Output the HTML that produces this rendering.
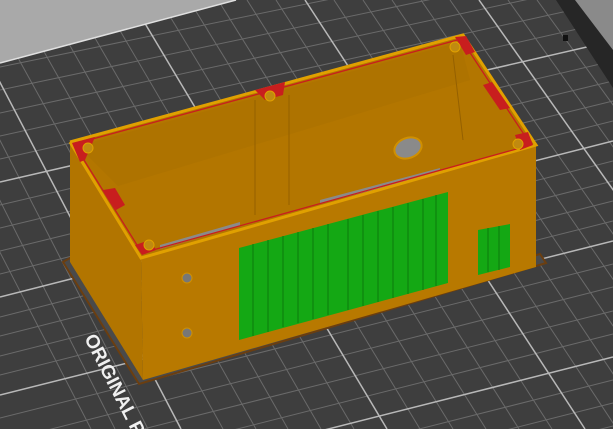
<!DOCTYPE html>
<html><head><style>
html,body{margin:0;padding:0;width:613px;height:429px;overflow:hidden;background:#3c3c3c}
svg{display:block}
</style></head><body>
<svg width="613" height="429" viewBox="0 0 613 429" xmlns="http://www.w3.org/2000/svg">
<rect width="613" height="429" fill="#3e3e3e"/>
<g stroke="#6a6a6a" stroke-width="1">
<line x1="-130" y1="0" x2="91" y2="429"/>
<line x1="-101" y1="0" x2="115" y2="429"/>
<line x1="-72" y1="0" x2="148" y2="429"/>
<line x1="-14" y1="0" x2="223" y2="429"/>
<line x1="15" y1="0" x2="256" y2="429"/>
<line x1="44" y1="0" x2="288" y2="429"/>
<line x1="73" y1="0" x2="321" y2="429"/>
<line x1="102" y1="0" x2="354" y2="429"/>
<line x1="160" y1="0" x2="420" y2="429"/>
<line x1="189" y1="0" x2="453" y2="429"/>
<line x1="218" y1="0" x2="486" y2="429"/>
<line x1="247" y1="0" x2="519" y2="429"/>
<line x1="276" y1="0" x2="552" y2="429"/>
<line x1="334" y1="0" x2="617" y2="429"/>
<line x1="363" y1="0" x2="650" y2="429"/>
<line x1="392" y1="0" x2="683" y2="429"/>
<line x1="421" y1="0" x2="716" y2="429"/>
<line x1="450" y1="0" x2="749" y2="429"/>
<line x1="508" y1="0" x2="815" y2="429"/>
<line x1="537" y1="0" x2="848" y2="429"/>
<line x1="0" y1="67" x2="613" y2="-59"/>
<line x1="0" y1="90" x2="613" y2="-39"/>
<line x1="0" y1="113" x2="613" y2="-19"/>
<line x1="0" y1="136" x2="613" y2="1"/>
<line x1="0" y1="159" x2="613" y2="21"/>
<line x1="0" y1="205" x2="613" y2="61"/>
<line x1="0" y1="228" x2="613" y2="81"/>
<line x1="0" y1="251" x2="613" y2="101"/>
<line x1="0" y1="274" x2="613" y2="121"/>
<line x1="0" y1="317" x2="613" y2="161"/>
<line x1="0" y1="336" x2="613" y2="181"/>
<line x1="0" y1="356" x2="613" y2="201"/>
<line x1="0" y1="375" x2="613" y2="221"/>
<line x1="0" y1="418" x2="613" y2="264"/>
<line x1="0" y1="442" x2="613" y2="287"/>
<line x1="0" y1="465" x2="613" y2="311"/>
<line x1="0" y1="489" x2="613" y2="334"/>
<line x1="0" y1="535" x2="613" y2="380"/>
<line x1="0" y1="558" x2="613" y2="403"/>
<line x1="0" y1="582" x2="613" y2="426"/>
</g>
<g stroke="#b8b8b8" stroke-width="1.5">
<line x1="-43" y1="0" x2="181" y2="429"/>
<line x1="131" y1="0" x2="387" y2="429"/>
<line x1="305" y1="0" x2="585" y2="429"/>
<line x1="479" y1="0" x2="782" y2="429"/>
<line x1="0" y1="182" x2="613" y2="41"/>
<line x1="0" y1="297" x2="613" y2="141"/>
<line x1="0" y1="395" x2="613" y2="241"/>
<line x1="0" y1="512" x2="613" y2="357"/>
</g>
<!-- outside bed regions -->
<polygon points="0,0 236,0 0,63" fill="#a9a9a9"/>
<line x1="0" y1="63" x2="236" y2="0" stroke="#e0e0e0" stroke-width="1.5"/>
<polygon points="556,0 613,0 613,88" fill="#262626"/>
<polygon points="575,0 613,0 613,50" fill="#8a8a8a"/>
<text x="0" y="0" transform="translate(84,338) rotate(63)" fill="#f0f0f0" font-family="Liberation Sans, sans-serif" font-size="19" font-weight="bold">ORIGINAL P</text>
<!-- skirt -->
<polygon points="63,262 139,384 546,263 540,254 533,256 145,377 70,258" fill="#4a4a4a" stroke="#6b3e10" stroke-width="2"/>
<!-- box -->
<polygon points="70,142 141,258 143,380 70,262" fill="#b27500"/>
<polygon points="141,258 536,145 536,267 143,380" fill="#b87900"/>
<polygon points="70,142 463,35 536,145 141,258" fill="#b37600"/>
<polygon points="78,146 460,42 470,80 118,186" fill="#aa7000" opacity="0.5"/>
<line x1="255" y1="100" x2="255" y2="215" stroke="#946000" stroke-width="1"/>
<line x1="289" y1="95" x2="289" y2="205" stroke="#946000" stroke-width="1"/>
<line x1="453" y1="55" x2="463" y2="140" stroke="#946000" stroke-width="1"/>
<polygon points="160,245 240,222 240,226 160,249" fill="#8a8a8a"/>
<polygon points="320,200 440,168 440,172 320,204" fill="#8a8a8a"/>
<polyline points="70,142 463,35 536,145 141,258 70,142" fill="none" stroke="#e0a000" stroke-width="3"/>
<polyline points="74,144 461,39 531,145 142,253 74,144" fill="none" stroke="#c81e1e" stroke-width="1.3"/>
<polygon points="72,143 95,137 85,160 80,162" fill="#c81e1e"/>
<polygon points="255,90 285,82 283,95 265,100" fill="#c81e1e"/>
<polygon points="455,37 466,36 475,52 466,55" fill="#c81e1e"/>
<polygon points="483,85 492,82 510,108 500,110" fill="#c81e1e"/>
<polygon points="515,135 528,132 533,145 520,150" fill="#c81e1e"/>
<polygon points="103,190 115,188 125,205 116,210" fill="#c81e1e"/>
<polygon points="135,245 150,240 156,250 142,255" fill="#c81e1e"/>
<g fill="#c08a10" stroke="#e0a000" stroke-width="1">
<circle cx="88" cy="148" r="5"/>
<circle cx="270" cy="96" r="5"/>
<circle cx="455" cy="47" r="5"/>
<circle cx="518" cy="144" r="5"/>
<circle cx="149" cy="245" r="5"/>
</g>
<ellipse cx="408" cy="148" rx="14" ry="10" transform="rotate(-20 408 148)" fill="#8a8a8a" stroke="#d09000" stroke-width="2"/>
<ellipse cx="187" cy="278" rx="5" ry="5" fill="#777" stroke="#d09000"/>
<ellipse cx="187" cy="333" rx="5" ry="5" fill="#777" stroke="#d09000"/>
<polygon points="239,248 448,192 448,283 239,340" fill="#14a814"/>
<g stroke="#0b7a0b" stroke-width="1">
<line x1="253" y1="244" x2="253" y2="336"/>
<line x1="268" y1="240" x2="268" y2="332"/>
<line x1="283" y1="236" x2="283" y2="327"/>
<line x1="298" y1="232" x2="298" y2="323"/>
<line x1="313" y1="228" x2="313" y2="319"/>
<line x1="328" y1="224" x2="328" y2="315"/>
<line x1="348" y1="219" x2="348" y2="310"/>
<line x1="363" y1="215" x2="363" y2="306"/>
<line x1="378" y1="211" x2="378" y2="302"/>
<line x1="393" y1="207" x2="393" y2="298"/>
<line x1="408" y1="203" x2="408" y2="294"/>
<line x1="423" y1="199" x2="423" y2="290"/>
<line x1="436" y1="195" x2="436" y2="286"/>
</g>
<polygon points="478,230 510,224 510,267 478,275" fill="#14a814"/>
<g stroke="#0b7a0b"><line x1="488" y1="228" x2="488" y2="272"/><line x1="499" y1="226" x2="499" y2="270"/></g>
<rect x="563" y="35" width="5" height="6" fill="#111"/>
</svg>
</body></html>
